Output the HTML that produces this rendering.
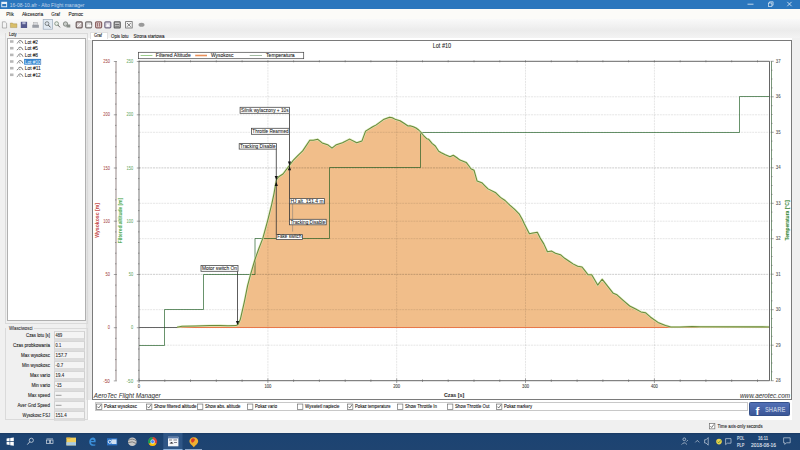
<!DOCTYPE html>
<html><head><meta charset="utf-8">
<style>
*{margin:0;padding:0;box-sizing:border-box}
html,body{width:800px;height:450px;overflow:hidden;background:#f0f0f0;font-family:"Liberation Sans",sans-serif;color:#222}
.a{position:absolute}
#title{left:0;top:0;width:800px;height:9px;background:#2b76bd}
#menu{left:0;top:9px;width:800px;height:10px;background:#fcfbf8}
#tool{left:0;top:19px;width:800px;height:11px;background:linear-gradient(#f9f9f9,#ececec)}
#tabstrip{left:0;top:30px;width:800px;height:8px;background:linear-gradient(#ebebeb,#f3f3f3)}
#tabpage{left:87.7px;top:38px;width:704.8px;height:382px;background:#fff}
#chart{left:92px;top:40px;width:700px;height:359.6px;border:1px solid #7a7a7a;background:#fff}
#tree{left:6.7px;top:38.2px;width:79.6px;height:283px;background:#fff;border:0.8px solid #b0b0b0}
.tb{position:absolute;left:54.3px;width:31.2px;height:10px;background:#f4f4f4;border-left:0.8px solid #d0d0d0;border-right:0.8px solid #d0d0d0;border-top:1px solid #d6d6d6;border-bottom:3px solid #dcdcdc}
.cb{position:absolute;width:5.8px;height:5.6px;border:0.7px solid #666;background:#fff}
.cb.on::after{content:"";position:absolute;left:1.5px;top:0.3px;width:1.7px;height:3.3px;border-right:0.6px solid #444;border-bottom:0.6px solid #444;transform:rotate(40deg)}
#taskbar{left:0;top:432.8px;width:800px;height:17.2px;background:linear-gradient(#1a3a62 0,#1c4372 2px,#1f4471 100%)}
</style></head><body>
<div id="title" class="a"></div>
<svg class="a" style="left:0;top:0" width="800" height="10">
 <rect x="1.3" y="1.8" width="5.8" height="5.4" fill="#e8f0f8"/><rect x="2.2" y="4" width="4" height="2.3" fill="#2b76bd"/>
 <line x1="747.5" y1="4.2" x2="753.5" y2="4.2" stroke="#fff" stroke-width="0.7"/>
 <rect x="768.3" y="3" width="3.6" height="3.6" fill="none" stroke="#fff" stroke-width="0.6"/>
 <path d="M769.6,3 V1.8 H773.1 V5.2 H771.9" fill="none" stroke="#fff" stroke-width="0.6"/>
 <path d="M787.3,1.9 L791.6,6.2 M791.6,1.9 L787.3,6.2" stroke="#fff" stroke-width="0.7"/>
</svg>
<div id="menu" class="a"></div>
<div id="tool" class="a"></div>
<svg class="a" style="left:0;top:18" width="150" height="13">
 <path d="M2.4,3.8 h2.8 l1.4,1.4 v4.8 h-4.2z" fill="#f4f4f4" stroke="#8a8a8a" stroke-width="0.6"/>
 <path d="M10.4,5 h2.2 l0.7,0.8 h3.6 v3.8 h-6.5z" fill="#d9bf6a" stroke="#9a8440" stroke-width="0.4"/>
 <rect x="20.8" y="3.8" width="6.3" height="6.2" fill="#565a8e"/>
 <rect x="22.3" y="4.2" width="3.3" height="2" fill="#b8bcd8"/>
 <path d="M32.3,6.8 h6.6 v3 h-6.6z" fill="#9a9ea6"/><rect x="33.6" y="4.4" width="4" height="2.6" fill="#d8dade" stroke="#8a8a8a" stroke-width="0.3"/>
 <rect x="43.2" y="1.4" width="9.2" height="9.8" fill="#e2eaf2" stroke="#9aaabb" stroke-width="0.7"/>
 <circle cx="47" cy="5.6" r="1.9" fill="#dfe6ee" stroke="#6a7070" stroke-width="0.8"/><line x1="48.3" y1="7" x2="50.5" y2="9.4" stroke="#555" stroke-width="1"/>
 <circle cx="56.6" cy="5.6" r="1.9" fill="#e8eee8" stroke="#7a8a7a" stroke-width="0.8"/><line x1="57.9" y1="7" x2="60" y2="9.4" stroke="#666" stroke-width="1"/>
 <circle cx="65.5" cy="6" r="2.2" fill="#c8ccc8" stroke="#6a706a" stroke-width="0.7"/><rect x="66.5" y="6.5" width="3.8" height="3" fill="#8a908a"/>
 <rect x="76.2" y="3.8" width="6" height="6" fill="#d8cfcf" stroke="#6e5e5e" stroke-width="1.2" rx="1"/><path d="M77.4,8.6 L81,5" stroke="#fff" stroke-width="0.9"/>
 <rect x="85.6" y="3.8" width="6" height="6" fill="#dcdcdc" stroke="#7a7676" stroke-width="1.2" rx="1"/><path d="M86.8,8.4 l1.5,-2.2 l1.3,1.4 l1.3,-1.4 l0.8,2.2z" fill="#fff"/>
 <rect x="95.6" y="3.8" width="6" height="6" fill="#e2d2d2" stroke="#8a6262" stroke-width="1.2" rx="1"/><path d="M97.6,5 v3.6 M99.6,5 v3.6" stroke="#8a5050" stroke-width="0.8"/>
 <rect x="104.8" y="3.8" width="6" height="6" fill="#dcd8e4" stroke="#766e86" stroke-width="1.2" rx="1"/><path d="M106,8.4 l1.8,-2.6 l1.8,2.6z" fill="#fff"/>
 <rect x="114.2" y="3.8" width="6" height="6" fill="#d8d8d8" stroke="#5e5e5e" stroke-width="1.2" rx="0.6"/><path d="M115.2,6.4 h4 M115.2,8.2 h4" stroke="#444" stroke-width="0.8"/>
 <rect x="125.6" y="3.6" width="6.6" height="6.4" fill="#f2f2f2" stroke="#6a6a6a" stroke-width="0.8"/><path d="M127,5 l3.8,3.8 M130.8,5 l-3.8,3.8" stroke="#555" stroke-width="0.7"/>
 <ellipse cx="141.5" cy="6.8" rx="3" ry="2" fill="#9a9a9a"/>
</svg>
<div id="tabstrip" class="a"></div>
<div id="tabpage" class="a"></div>
<div class="a" style="left:86.3px;top:40px;width:5.9px;height:359.5px;background:linear-gradient(90deg,#e2e2e2,#ececec)"></div>
<div class="a" style="left:89.5px;top:31.5px;width:18px;height:7px;background:#fff;border:0.6px solid #e0e0e0;border-bottom:none"></div>
<div id="chart" class="a"></div>

<div class="a" style="left:5px;top:33px;width:82.6px;height:291px;border:0.6px solid #dadada;border-top:none"></div>
<div class="a" style="left:17.5px;top:33px;width:70px;height:0.6px;background:#dadada"></div>
<div class="a" style="left:34px;top:328px;width:53.6px;height:0.6px;background:#dadada"></div>
<div id="tree" class="a"></div>
<svg class="a" style="left:0;top:36" width="90" height="45">
 <g fill="#b8b8b8">
  <rect x="10" y="4.2" width="3.5" height="2.6"/><rect x="10" y="10.9" width="3.5" height="2.6"/>
  <rect x="10" y="17.6" width="3.5" height="2.6"/><rect x="10" y="24.2" width="3.5" height="2.6"/>
  <rect x="10" y="30.9" width="3.5" height="2.6"/><rect x="10" y="37.5" width="3.5" height="2.6"/>
 </g>
 <g fill="none" stroke="#2a2a2a" stroke-width="0.6">
  <path d="M16.8,7.40 l1.6,-1.2 M18.2,5.60 q1.8,-2.2 3.6,-0.4 l1.2,2.2 M19.5,6.20 l0.6,1.2"/>
  <path d="M16.8,14.07 l1.6,-1.2 M18.2,12.27 q1.8,-2.2 3.6,-0.4 l1.2,2.2 M19.5,12.87 l0.6,1.2"/>
  <path d="M16.8,20.74 l1.6,-1.2 M18.2,18.94 q1.8,-2.2 3.6,-0.4 l1.2,2.2 M19.5,19.54 l0.6,1.2"/>
  <path d="M16.8,27.41 l1.6,-1.2 M18.2,25.61 q1.8,-2.2 3.6,-0.4 l1.2,2.2 M19.5,26.21 l0.6,1.2"/>
  <path d="M16.8,34.08 l1.6,-1.2 M18.2,32.28 q1.8,-2.2 3.6,-0.4 l1.2,2.2 M19.5,32.88 l0.6,1.2"/>
  <path d="M16.8,40.75 l1.6,-1.2 M18.2,38.95 q1.8,-2.2 3.6,-0.4 l1.2,2.2 M19.5,39.55 l0.6,1.2"/>
 </g>
 <rect x="24.1" y="22.9" width="17" height="5.8" fill="#3a84cc"/>
</svg>

<div class="a" style="left:5px;top:328px;width:82.6px;height:92px;border:0.6px solid #dadada;border-top:none"></div>




<div class="tb" style="top:331px"></div><div class="tb" style="top:341px"></div><div class="tb" style="top:351px"></div><div class="tb" style="top:361px"></div><div class="tb" style="top:371px"></div><div class="tb" style="top:381px"></div><div class="tb" style="top:391px"></div><div class="tb" style="top:401px"></div><div class="tb" style="top:411px"></div>
<svg width="800" height="450" viewBox="0 0 800 450" style="position:absolute;left:0;top:0" font-family="Liberation Sans, sans-serif"><path d="M177,327.5 L177.0,327.2 L182.0,326.3 L195.0,326.0 L210.0,325.6 L220.0,325.4 L228.0,325.8 L236.0,325.6 L238.0,324.5 L240.4,319.2 L244.4,301.6 L247.6,285.6 L250.8,273.6 L254.8,260.0 L258.5,249.5 L262.8,238.4 L267.6,220.8 L271.6,204.8 L274.0,193.6 L275.6,184.0 L276.6,179.5 L278.7,176.7 L283.0,174.0 L289.0,166.0 L292.9,160.7 L297.3,156.2 L302.7,150.9 L309.8,140.2 L313.3,140.2 L317.8,139.3 L322.2,142.9 L327.6,144.7 L332.0,148.2 L336.4,144.7 L342.5,142.7 L349.6,139.1 L356.7,142.7 L362.0,140.9 L365.6,131.1 L372.7,126.7 L376.3,124.9 L383.4,119.6 L389.6,117.3 L392.3,117.8 L395.8,119.6 L400.0,120.7 L404.0,123.3 L408.0,126.0 L410.0,125.7 L413.3,126.7 L416.0,128.0 L418.7,130.0 L420.7,132.0 L423.3,135.3 L426.7,138.7 L428.7,139.3 L432.0,143.3 L435.3,146.0 L438.7,151.3 L441.3,152.7 L445.3,154.7 L450.0,156.7 L453.3,155.3 L457.3,158.0 L460.0,160.1 L466.2,162.4 L468.6,165.5 L470.9,168.7 L474.0,170.2 L477.1,181.1 L481.8,182.7 L484.9,185.8 L488.0,188.9 L495.8,192.8 L500.4,197.4 L505.1,200.5 L509.8,205.2 L514.4,209.1 L519.1,213.8 L522.2,219.2 L524.3,223.7 L527.2,229.4 L529.4,233.8 L533.0,233.0 L537.3,232.3 L540.2,238.1 L543.8,243.9 L547.4,251.8 L551.7,251.1 L555.4,253.2 L560.4,254.7 L564.7,258.3 L569.1,261.2 L573.4,264.1 L577.7,266.2 L582.0,267.0 L584.9,270.6 L588.0,274.7 L591.7,274.7 L597.7,285.1 L602.1,279.2 L607.4,285.9 L613.3,293.3 L617.0,294.8 L623.7,300.8 L629.7,306.0 L635.7,309.0 L640.9,311.9 L645.4,312.7 L650.6,317.2 L658.0,322.4 L665.5,325.4 L670.8,327.0 L680.0,327.0 L692.0,326.5 L700.0,326.8 L769.5,326.9 L769.5,327.5 Z" fill="#f1be8a"/><g stroke="#000" stroke-opacity="0.13" stroke-width="0.8" stroke-dasharray="2,0.8"><line x1="139" y1="114.8" x2="769.5" y2="114.8"/><line x1="139" y1="168.0" x2="769.5" y2="168.0"/><line x1="139" y1="221.2" x2="769.5" y2="221.2"/><line x1="139" y1="274.5" x2="769.5" y2="274.5"/><line x1="139" y1="327.7" x2="769.5" y2="327.7"/><line x1="139" y1="96.8" x2="769.5" y2="96.8"/><line x1="139" y1="132.3" x2="769.5" y2="132.3"/><line x1="139" y1="167.8" x2="769.5" y2="167.8"/><line x1="139" y1="203.3" x2="769.5" y2="203.3"/><line x1="139" y1="238.7" x2="769.5" y2="238.7"/><line x1="139" y1="274.2" x2="769.5" y2="274.2"/><line x1="139" y1="309.7" x2="769.5" y2="309.7"/><line x1="139" y1="345.2" x2="769.5" y2="345.2"/><line x1="267.9" y1="61.3" x2="267.9" y2="380.7"/><line x1="396.7" y1="61.3" x2="396.7" y2="380.7"/><line x1="525.5" y1="61.3" x2="525.5" y2="380.7"/><line x1="654.4" y1="61.3" x2="654.4" y2="380.7"/></g><line x1="139" y1="327.5" x2="177" y2="327.5" stroke="#555" stroke-width="0.9"/><line x1="177" y1="327.5" x2="769.5" y2="327.5" stroke="#e8784a" stroke-width="1.2"/><polyline points="139,345.5 164.5,345.5 164.5,309.5 203.5,309.5 203.5,274.5 255,274.5 255,238.5 329.5,238.5 329.5,167.5 420.5,167.5 420.5,132.5 739.5,132.5 739.5,96.5 769.5,96.5" fill="none" stroke="#17581c" stroke-opacity="0.72" stroke-width="0.9"/><polyline points="177.0,327.2 182.0,326.3 195.0,326.0 210.0,325.6 220.0,325.4 228.0,325.8 236.0,325.6 238.0,324.5 240.4,319.2 244.4,301.6 247.6,285.6 250.8,273.6 254.8,260.0 258.5,249.5 262.8,238.4 267.6,220.8 271.6,204.8 274.0,193.6 275.6,184.0 276.6,179.5 278.7,176.7 283.0,174.0 289.0,166.0 292.9,160.7 297.3,156.2 302.7,150.9 309.8,140.2 313.3,140.2 317.8,139.3 322.2,142.9 327.6,144.7 332.0,148.2 336.4,144.7 342.5,142.7 349.6,139.1 356.7,142.7 362.0,140.9 365.6,131.1 372.7,126.7 376.3,124.9 383.4,119.6 389.6,117.3 392.3,117.8 395.8,119.6 400.0,120.7 404.0,123.3 408.0,126.0 410.0,125.7 413.3,126.7 416.0,128.0 418.7,130.0 420.7,132.0 423.3,135.3 426.7,138.7 428.7,139.3 432.0,143.3 435.3,146.0 438.7,151.3 441.3,152.7 445.3,154.7 450.0,156.7 453.3,155.3 457.3,158.0 460.0,160.1 466.2,162.4 468.6,165.5 470.9,168.7 474.0,170.2 477.1,181.1 481.8,182.7 484.9,185.8 488.0,188.9 495.8,192.8 500.4,197.4 505.1,200.5 509.8,205.2 514.4,209.1 519.1,213.8 522.2,219.2 524.3,223.7 527.2,229.4 529.4,233.8 533.0,233.0 537.3,232.3 540.2,238.1 543.8,243.9 547.4,251.8 551.7,251.1 555.4,253.2 560.4,254.7 564.7,258.3 569.1,261.2 573.4,264.1 577.7,266.2 582.0,267.0 584.9,270.6 588.0,274.7 591.7,274.7 597.7,285.1 602.1,279.2 607.4,285.9 613.3,293.3 617.0,294.8 623.7,300.8 629.7,306.0 635.7,309.0 640.9,311.9 645.4,312.7 650.6,317.2 658.0,322.4 665.5,325.4 670.8,327.0 680.0,327.0 692.0,326.5 700.0,326.8 769.5,326.9" fill="none" stroke="#d8ebb8" stroke-width="2.2" stroke-linejoin="round" opacity="0.8"/><polyline points="177.0,327.2 182.0,326.3 195.0,326.0 210.0,325.6 220.0,325.4 228.0,325.8 236.0,325.6 238.0,324.5 240.4,319.2 244.4,301.6 247.6,285.6 250.8,273.6 254.8,260.0 258.5,249.5 262.8,238.4 267.6,220.8 271.6,204.8 274.0,193.6 275.6,184.0 276.6,179.5 278.7,176.7 283.0,174.0 289.0,166.0 292.9,160.7 297.3,156.2 302.7,150.9 309.8,140.2 313.3,140.2 317.8,139.3 322.2,142.9 327.6,144.7 332.0,148.2 336.4,144.7 342.5,142.7 349.6,139.1 356.7,142.7 362.0,140.9 365.6,131.1 372.7,126.7 376.3,124.9 383.4,119.6 389.6,117.3 392.3,117.8 395.8,119.6 400.0,120.7 404.0,123.3 408.0,126.0 410.0,125.7 413.3,126.7 416.0,128.0 418.7,130.0 420.7,132.0 423.3,135.3 426.7,138.7 428.7,139.3 432.0,143.3 435.3,146.0 438.7,151.3 441.3,152.7 445.3,154.7 450.0,156.7 453.3,155.3 457.3,158.0 460.0,160.1 466.2,162.4 468.6,165.5 470.9,168.7 474.0,170.2 477.1,181.1 481.8,182.7 484.9,185.8 488.0,188.9 495.8,192.8 500.4,197.4 505.1,200.5 509.8,205.2 514.4,209.1 519.1,213.8 522.2,219.2 524.3,223.7 527.2,229.4 529.4,233.8 533.0,233.0 537.3,232.3 540.2,238.1 543.8,243.9 547.4,251.8 551.7,251.1 555.4,253.2 560.4,254.7 564.7,258.3 569.1,261.2 573.4,264.1 577.7,266.2 582.0,267.0 584.9,270.6 588.0,274.7 591.7,274.7 597.7,285.1 602.1,279.2 607.4,285.9 613.3,293.3 617.0,294.8 623.7,300.8 629.7,306.0 635.7,309.0 640.9,311.9 645.4,312.7 650.6,317.2 658.0,322.4 665.5,325.4 670.8,327.0 680.0,327.0 692.0,326.5 700.0,326.8 769.5,326.9" fill="none" stroke="#6a8a3c" stroke-width="1.05" stroke-linejoin="round"/><line x1="116" y1="61.3" x2="116" y2="380.7" stroke="#8a7a7a" stroke-width="0.9"/><line x1="139" y1="61.3" x2="139" y2="380.7" stroke="#666" stroke-width="0.9"/><line x1="139" y1="61.3" x2="769.5" y2="61.3" stroke="#555" stroke-width="0.9"/><line x1="139" y1="380.7" x2="769.5" y2="380.7" stroke="#555" stroke-width="0.9"/><line x1="769.5" y1="61.3" x2="769.5" y2="380.7" stroke="#555" stroke-width="0.9"/><line x1="771.5" y1="61.3" x2="771.5" y2="380.7" stroke="#6a8a6a" stroke-width="0.9"/><g stroke="#666" stroke-width="0.6"><line x1="113.8" y1="380.9" x2="116.88" y2="380.9"/><line x1="136.8" y1="380.9" x2="139.88" y2="380.9"/><line x1="115.0" y1="370.3" x2="116.4" y2="370.3"/><line x1="138.0" y1="370.3" x2="139.4" y2="370.3"/><line x1="115.0" y1="359.6" x2="116.4" y2="359.6"/><line x1="138.0" y1="359.6" x2="139.4" y2="359.6"/><line x1="115.0" y1="349.0" x2="116.4" y2="349.0"/><line x1="138.0" y1="349.0" x2="139.4" y2="349.0"/><line x1="115.0" y1="338.3" x2="116.4" y2="338.3"/><line x1="138.0" y1="338.3" x2="139.4" y2="338.3"/><line x1="113.8" y1="327.7" x2="116.88" y2="327.7"/><line x1="136.8" y1="327.7" x2="139.88" y2="327.7"/><line x1="115.0" y1="317.1" x2="116.4" y2="317.1"/><line x1="138.0" y1="317.1" x2="139.4" y2="317.1"/><line x1="115.0" y1="306.4" x2="116.4" y2="306.4"/><line x1="138.0" y1="306.4" x2="139.4" y2="306.4"/><line x1="115.0" y1="295.8" x2="116.4" y2="295.8"/><line x1="138.0" y1="295.8" x2="139.4" y2="295.8"/><line x1="115.0" y1="285.1" x2="116.4" y2="285.1"/><line x1="138.0" y1="285.1" x2="139.4" y2="285.1"/><line x1="113.8" y1="274.5" x2="116.88" y2="274.5"/><line x1="136.8" y1="274.5" x2="139.88" y2="274.5"/><line x1="115.0" y1="263.8" x2="116.4" y2="263.8"/><line x1="138.0" y1="263.8" x2="139.4" y2="263.8"/><line x1="115.0" y1="253.2" x2="116.4" y2="253.2"/><line x1="138.0" y1="253.2" x2="139.4" y2="253.2"/><line x1="115.0" y1="242.5" x2="116.4" y2="242.5"/><line x1="138.0" y1="242.5" x2="139.4" y2="242.5"/><line x1="115.0" y1="231.9" x2="116.4" y2="231.9"/><line x1="138.0" y1="231.9" x2="139.4" y2="231.9"/><line x1="113.8" y1="221.2" x2="116.88" y2="221.2"/><line x1="136.8" y1="221.2" x2="139.88" y2="221.2"/><line x1="115.0" y1="210.6" x2="116.4" y2="210.6"/><line x1="138.0" y1="210.6" x2="139.4" y2="210.6"/><line x1="115.0" y1="199.9" x2="116.4" y2="199.9"/><line x1="138.0" y1="199.9" x2="139.4" y2="199.9"/><line x1="115.0" y1="189.3" x2="116.4" y2="189.3"/><line x1="138.0" y1="189.3" x2="139.4" y2="189.3"/><line x1="115.0" y1="178.6" x2="116.4" y2="178.6"/><line x1="138.0" y1="178.6" x2="139.4" y2="178.6"/><line x1="113.8" y1="168.0" x2="116.88" y2="168.0"/><line x1="136.8" y1="168.0" x2="139.88" y2="168.0"/><line x1="115.0" y1="157.4" x2="116.4" y2="157.4"/><line x1="138.0" y1="157.4" x2="139.4" y2="157.4"/><line x1="115.0" y1="146.7" x2="116.4" y2="146.7"/><line x1="138.0" y1="146.7" x2="139.4" y2="146.7"/><line x1="115.0" y1="136.1" x2="116.4" y2="136.1"/><line x1="138.0" y1="136.1" x2="139.4" y2="136.1"/><line x1="115.0" y1="125.4" x2="116.4" y2="125.4"/><line x1="138.0" y1="125.4" x2="139.4" y2="125.4"/><line x1="113.8" y1="114.8" x2="116.88" y2="114.8"/><line x1="136.8" y1="114.8" x2="139.88" y2="114.8"/><line x1="115.0" y1="104.1" x2="116.4" y2="104.1"/><line x1="138.0" y1="104.1" x2="139.4" y2="104.1"/><line x1="115.0" y1="93.5" x2="116.4" y2="93.5"/><line x1="138.0" y1="93.5" x2="139.4" y2="93.5"/><line x1="115.0" y1="82.8" x2="116.4" y2="82.8"/><line x1="138.0" y1="82.8" x2="139.4" y2="82.8"/><line x1="115.0" y1="72.2" x2="116.4" y2="72.2"/><line x1="138.0" y1="72.2" x2="139.4" y2="72.2"/><line x1="113.8" y1="61.5" x2="116.88" y2="61.5"/><line x1="136.8" y1="61.5" x2="139.88" y2="61.5"/><line x1="770.62" y1="380.7" x2="773.7" y2="380.7"/><line x1="771.1" y1="371.8" x2="772.5" y2="371.8"/><line x1="771.1" y1="363.0" x2="772.5" y2="363.0"/><line x1="771.1" y1="354.1" x2="772.5" y2="354.1"/><line x1="770.62" y1="345.2" x2="773.7" y2="345.2"/><line x1="771.1" y1="336.3" x2="772.5" y2="336.3"/><line x1="771.1" y1="327.5" x2="772.5" y2="327.5"/><line x1="771.1" y1="318.6" x2="772.5" y2="318.6"/><line x1="770.62" y1="309.7" x2="773.7" y2="309.7"/><line x1="771.1" y1="300.8" x2="772.5" y2="300.8"/><line x1="771.1" y1="292.0" x2="772.5" y2="292.0"/><line x1="771.1" y1="283.1" x2="772.5" y2="283.1"/><line x1="770.62" y1="274.2" x2="773.7" y2="274.2"/><line x1="771.1" y1="265.4" x2="772.5" y2="265.4"/><line x1="771.1" y1="256.5" x2="772.5" y2="256.5"/><line x1="771.1" y1="247.6" x2="772.5" y2="247.6"/><line x1="770.62" y1="238.7" x2="773.7" y2="238.7"/><line x1="771.1" y1="229.9" x2="772.5" y2="229.9"/><line x1="771.1" y1="221.0" x2="772.5" y2="221.0"/><line x1="771.1" y1="212.1" x2="772.5" y2="212.1"/><line x1="770.62" y1="203.3" x2="773.7" y2="203.3"/><line x1="771.1" y1="194.4" x2="772.5" y2="194.4"/><line x1="771.1" y1="185.5" x2="772.5" y2="185.5"/><line x1="771.1" y1="176.6" x2="772.5" y2="176.6"/><line x1="770.62" y1="167.8" x2="773.7" y2="167.8"/><line x1="771.1" y1="158.9" x2="772.5" y2="158.9"/><line x1="771.1" y1="150.0" x2="772.5" y2="150.0"/><line x1="771.1" y1="141.1" x2="772.5" y2="141.1"/><line x1="770.62" y1="132.3" x2="773.7" y2="132.3"/><line x1="771.1" y1="123.4" x2="772.5" y2="123.4"/><line x1="771.1" y1="114.5" x2="772.5" y2="114.5"/><line x1="771.1" y1="105.7" x2="772.5" y2="105.7"/><line x1="770.62" y1="96.8" x2="773.7" y2="96.8"/><line x1="771.1" y1="87.9" x2="772.5" y2="87.9"/><line x1="771.1" y1="79.0" x2="772.5" y2="79.0"/><line x1="771.1" y1="70.2" x2="772.5" y2="70.2"/><line x1="770.62" y1="61.3" x2="773.7" y2="61.3"/><line x1="139.0" y1="378.4" x2="139.0" y2="383.0"/><line x1="139.0" y1="60.3" x2="139.0" y2="62.3"/><line x1="164.8" y1="379.4" x2="164.8" y2="382.0"/><line x1="164.8" y1="60.3" x2="164.8" y2="62.3"/><line x1="190.5" y1="379.4" x2="190.5" y2="382.0"/><line x1="190.5" y1="60.3" x2="190.5" y2="62.3"/><line x1="216.3" y1="379.4" x2="216.3" y2="382.0"/><line x1="216.3" y1="60.3" x2="216.3" y2="62.3"/><line x1="242.1" y1="379.4" x2="242.1" y2="382.0"/><line x1="242.1" y1="60.3" x2="242.1" y2="62.3"/><line x1="267.9" y1="378.4" x2="267.9" y2="383.0"/><line x1="267.9" y1="60.3" x2="267.9" y2="62.3"/><line x1="293.6" y1="379.4" x2="293.6" y2="382.0"/><line x1="293.6" y1="60.3" x2="293.6" y2="62.3"/><line x1="319.4" y1="379.4" x2="319.4" y2="382.0"/><line x1="319.4" y1="60.3" x2="319.4" y2="62.3"/><line x1="345.2" y1="379.4" x2="345.2" y2="382.0"/><line x1="345.2" y1="60.3" x2="345.2" y2="62.3"/><line x1="370.9" y1="379.4" x2="370.9" y2="382.0"/><line x1="370.9" y1="60.3" x2="370.9" y2="62.3"/><line x1="396.7" y1="378.4" x2="396.7" y2="383.0"/><line x1="396.7" y1="60.3" x2="396.7" y2="62.3"/><line x1="422.5" y1="379.4" x2="422.5" y2="382.0"/><line x1="422.5" y1="60.3" x2="422.5" y2="62.3"/><line x1="448.2" y1="379.4" x2="448.2" y2="382.0"/><line x1="448.2" y1="60.3" x2="448.2" y2="62.3"/><line x1="474.0" y1="379.4" x2="474.0" y2="382.0"/><line x1="474.0" y1="60.3" x2="474.0" y2="62.3"/><line x1="499.8" y1="379.4" x2="499.8" y2="382.0"/><line x1="499.8" y1="60.3" x2="499.8" y2="62.3"/><line x1="525.5" y1="378.4" x2="525.5" y2="383.0"/><line x1="525.5" y1="60.3" x2="525.5" y2="62.3"/><line x1="551.3" y1="379.4" x2="551.3" y2="382.0"/><line x1="551.3" y1="60.3" x2="551.3" y2="62.3"/><line x1="577.1" y1="379.4" x2="577.1" y2="382.0"/><line x1="577.1" y1="60.3" x2="577.1" y2="62.3"/><line x1="602.9" y1="379.4" x2="602.9" y2="382.0"/><line x1="602.9" y1="60.3" x2="602.9" y2="62.3"/><line x1="628.6" y1="379.4" x2="628.6" y2="382.0"/><line x1="628.6" y1="60.3" x2="628.6" y2="62.3"/><line x1="654.4" y1="378.4" x2="654.4" y2="383.0"/><line x1="654.4" y1="60.3" x2="654.4" y2="62.3"/><line x1="680.2" y1="379.4" x2="680.2" y2="382.0"/><line x1="680.2" y1="60.3" x2="680.2" y2="62.3"/><line x1="705.9" y1="379.4" x2="705.9" y2="382.0"/><line x1="705.9" y1="60.3" x2="705.9" y2="62.3"/><line x1="731.7" y1="379.4" x2="731.7" y2="382.0"/><line x1="731.7" y1="60.3" x2="731.7" y2="62.3"/><line x1="757.5" y1="379.4" x2="757.5" y2="382.0"/><line x1="757.5" y1="60.3" x2="757.5" y2="62.3"/></g><g><text x="109.90" y="63.23" font-size="4.6" fill="#a84848" text-anchor="end" textLength="6.60" lengthAdjust="spacingAndGlyphs" stroke="#a84848" stroke-width="0.04">250</text><text x="133.20" y="63.23" font-size="4.6" fill="#68a868" text-anchor="end" textLength="6.60" lengthAdjust="spacingAndGlyphs" stroke="#68a868" stroke-width="0.04">250</text><text x="109.90" y="116.47" font-size="4.6" fill="#a84848" text-anchor="end" textLength="6.60" lengthAdjust="spacingAndGlyphs" stroke="#a84848" stroke-width="0.04">200</text><text x="133.20" y="116.47" font-size="4.6" fill="#68a868" text-anchor="end" textLength="6.60" lengthAdjust="spacingAndGlyphs" stroke="#68a868" stroke-width="0.04">200</text><text x="109.90" y="169.70" font-size="4.6" fill="#a84848" text-anchor="end" textLength="6.60" lengthAdjust="spacingAndGlyphs" stroke="#a84848" stroke-width="0.04">150</text><text x="133.20" y="169.70" font-size="4.6" fill="#68a868" text-anchor="end" textLength="6.60" lengthAdjust="spacingAndGlyphs" stroke="#68a868" stroke-width="0.04">150</text><text x="109.90" y="222.93" font-size="4.6" fill="#a84848" text-anchor="end" textLength="6.60" lengthAdjust="spacingAndGlyphs" stroke="#a84848" stroke-width="0.04">100</text><text x="133.20" y="222.93" font-size="4.6" fill="#68a868" text-anchor="end" textLength="6.60" lengthAdjust="spacingAndGlyphs" stroke="#68a868" stroke-width="0.04">100</text><text x="109.90" y="276.17" font-size="4.6" fill="#a84848" text-anchor="end" textLength="4.40" lengthAdjust="spacingAndGlyphs" stroke="#a84848" stroke-width="0.04">50</text><text x="133.20" y="276.17" font-size="4.6" fill="#68a868" text-anchor="end" textLength="4.40" lengthAdjust="spacingAndGlyphs" stroke="#68a868" stroke-width="0.04">50</text><text x="109.90" y="329.40" font-size="4.6" fill="#a84848" text-anchor="end" textLength="2.20" lengthAdjust="spacingAndGlyphs" stroke="#a84848" stroke-width="0.04">0</text><text x="133.20" y="329.40" font-size="4.6" fill="#68a868" text-anchor="end" textLength="2.20" lengthAdjust="spacingAndGlyphs" stroke="#68a868" stroke-width="0.04">0</text><text x="109.90" y="382.63" font-size="4.6" fill="#a84848" text-anchor="end" textLength="6.60" lengthAdjust="spacingAndGlyphs" stroke="#a84848" stroke-width="0.04">-50</text><text x="133.20" y="382.63" font-size="4.6" fill="#68a868" text-anchor="end" textLength="6.60" lengthAdjust="spacingAndGlyphs" stroke="#68a868" stroke-width="0.04">-50</text><text x="775.80" y="382.30" font-size="4.6" fill="#555" textLength="4.80" lengthAdjust="spacingAndGlyphs" stroke="#555" stroke-width="0.08">28</text><text x="775.80" y="346.81" font-size="4.6" fill="#555" textLength="4.80" lengthAdjust="spacingAndGlyphs" stroke="#555" stroke-width="0.08">29</text><text x="775.80" y="311.32" font-size="4.6" fill="#555" textLength="4.80" lengthAdjust="spacingAndGlyphs" stroke="#555" stroke-width="0.08">30</text><text x="775.80" y="275.83" font-size="4.6" fill="#555" textLength="4.80" lengthAdjust="spacingAndGlyphs" stroke="#555" stroke-width="0.08">31</text><text x="775.80" y="240.34" font-size="4.6" fill="#555" textLength="4.80" lengthAdjust="spacingAndGlyphs" stroke="#555" stroke-width="0.08">32</text><text x="775.80" y="204.86" font-size="4.6" fill="#555" textLength="4.80" lengthAdjust="spacingAndGlyphs" stroke="#555" stroke-width="0.08">33</text><text x="775.80" y="169.37" font-size="4.6" fill="#555" textLength="4.80" lengthAdjust="spacingAndGlyphs" stroke="#555" stroke-width="0.08">34</text><text x="775.80" y="133.88" font-size="4.6" fill="#555" textLength="4.80" lengthAdjust="spacingAndGlyphs" stroke="#555" stroke-width="0.08">35</text><text x="775.80" y="98.39" font-size="4.6" fill="#555" textLength="4.80" lengthAdjust="spacingAndGlyphs" stroke="#555" stroke-width="0.08">36</text><text x="775.80" y="62.90" font-size="4.6" fill="#555" textLength="4.80" lengthAdjust="spacingAndGlyphs" stroke="#555" stroke-width="0.08">37</text><text x="139.00" y="388.30" font-size="4.6" fill="#444" text-anchor="middle" textLength="2.30" lengthAdjust="spacingAndGlyphs" stroke="#444" stroke-width="0.08">0</text><text x="267.85" y="388.30" font-size="4.6" fill="#444" text-anchor="middle" textLength="6.90" lengthAdjust="spacingAndGlyphs" stroke="#444" stroke-width="0.08">100</text><text x="396.70" y="388.30" font-size="4.6" fill="#444" text-anchor="middle" textLength="6.90" lengthAdjust="spacingAndGlyphs" stroke="#444" stroke-width="0.08">200</text><text x="525.55" y="388.30" font-size="4.6" fill="#444" text-anchor="middle" textLength="6.90" lengthAdjust="spacingAndGlyphs" stroke="#444" stroke-width="0.08">300</text><text x="654.40" y="388.30" font-size="4.6" fill="#444" text-anchor="middle" textLength="6.90" lengthAdjust="spacingAndGlyphs" stroke="#444" stroke-width="0.08">400</text></g><g stroke="#333" stroke-width="0.8"><line x1="237.5" y1="271" x2="237.5" y2="322"/><line x1="276.3" y1="149" x2="276.3" y2="234.6"/><line x1="289.5" y1="113.4" x2="289.5" y2="224.8"/><line x1="292.6" y1="203.7" x2="292.6" y2="219.3" stroke="#777" stroke-width="0.5"/><line x1="292.6" y1="224.8" x2="292.6" y2="231.6" stroke="#777" stroke-width="0.5"/></g><path d="M235.9,321 L239.1,321 L237.5,325 Z" fill="#111"/><path d="M274.7,176 L277.90000000000003,176 L276.3,180 Z" fill="#111"/><path d="M274.7,186 L277.90000000000003,186 L276.3,182 Z" fill="#111"/><path d="M287.9,161.4 L291.1,161.4 L289.5,165.4 Z" fill="#111"/><path d="M287.9,170.2 L291.1,170.2 L289.5,166.2 Z" fill="#111"/><rect x="201.0" y="265.5" width="37.0" height="5.800000000000011" fill="#fff" stroke="#4a4a4a" stroke-width="0.8"/><text x="201.90" y="270.10" font-size="4.7" fill="#1a1a1a" textLength="35.20" lengthAdjust="spacingAndGlyphs" stroke="#1a1a1a" stroke-width="0.06">Motor switch On</text><rect x="276.3" y="234.6" width="26.099999999999966" height="4.900000000000006" fill="#fff" stroke="#4a4a4a" stroke-width="0.8"/><text x="277.20" y="238.30" font-size="4.7" fill="#1a1a1a" textLength="24.30" lengthAdjust="spacingAndGlyphs" stroke="#1a1a1a" stroke-width="0.06">Fake switch</text><rect x="240.1" y="107.3" width="49.400000000000006" height="6.0" fill="#fff" stroke="#4a4a4a" stroke-width="0.8"/><text x="241.00" y="112.10" font-size="4.7" fill="#1a1a1a" textLength="47.60" lengthAdjust="spacingAndGlyphs" stroke="#1a1a1a" stroke-width="0.06">Silnik wylaczony + 10s</text><rect x="251.4" y="128.3" width="38.099999999999994" height="6.0" fill="#fff" stroke="#4a4a4a" stroke-width="0.8"/><text x="252.30" y="133.10" font-size="4.7" fill="#1a1a1a" textLength="36.30" lengthAdjust="spacingAndGlyphs" stroke="#1a1a1a" stroke-width="0.06">Throttle Rearmed</text><rect x="239.2" y="143.6" width="37.30000000000001" height="5.5" fill="#fff" stroke="#4a4a4a" stroke-width="0.8"/><text x="240.10" y="147.90" font-size="4.7" fill="#1a1a1a" textLength="35.50" lengthAdjust="spacingAndGlyphs" stroke="#1a1a1a" stroke-width="0.06">Tracking Disable</text><rect x="289.5" y="198.6" width="34.89999999999998" height="5.200000000000017" fill="#fff" stroke="#4a4a4a" stroke-width="0.8"/><text x="290.40" y="202.60" font-size="4.7" fill="#1a1a1a" textLength="33.10" lengthAdjust="spacingAndGlyphs" stroke="#1a1a1a" stroke-width="0.06">HJ alt. 151.4 m</text><rect x="289.5" y="219.3" width="36.69999999999999" height="5.5" fill="#fff" stroke="#4a4a4a" stroke-width="0.8"/><text x="290.40" y="223.60" font-size="4.7" fill="#1a1a1a" textLength="34.90" lengthAdjust="spacingAndGlyphs" stroke="#1a1a1a" stroke-width="0.06">Tracking Disable</text><rect x="138.5" y="52.3" width="165.2" height="6.4" fill="#fff" stroke="#444" stroke-width="0.7"/><line x1="140.6" y1="55.5" x2="152.4" y2="55.5" stroke="#9ccc8c" stroke-width="1"/><line x1="195.2" y1="55.5" x2="207" y2="55.5" stroke="#e8905a" stroke-width="1.6"/><line x1="249.7" y1="55.5" x2="262" y2="55.5" stroke="#8aa88a" stroke-width="0.8"/><text x="155.80" y="57.30" font-size="5" fill="#222" textLength="34.90" lengthAdjust="spacingAndGlyphs" stroke="#222" stroke-width="0.08">Filtered Altitude</text><text x="211.00" y="57.30" font-size="5" fill="#222" textLength="22.50" lengthAdjust="spacingAndGlyphs" stroke="#222" stroke-width="0.08">Wysokosc</text><text x="266.00" y="57.30" font-size="5" fill="#222" textLength="28.70" lengthAdjust="spacingAndGlyphs" stroke="#222" stroke-width="0.08">Temperatura</text><text x="432.70" y="47.70" font-size="6.8" fill="#222" textLength="18.50" lengthAdjust="spacingAndGlyphs" stroke="#222" stroke-width="0.08">Lot #10</text><text x="444.00" y="396.60" font-size="5" fill="#333" font-weight="bold" textLength="20.20" lengthAdjust="spacingAndGlyphs" stroke="#333" stroke-width="0.08">Czas [s]</text><g transform="translate(98.8,220.4) rotate(-90)"><text x="0.00" y="0.00" font-size="5" fill="#c85050" text-anchor="middle" font-weight="bold" textLength="34.80" lengthAdjust="spacingAndGlyphs" stroke="#c85050" stroke-width="0.08">Wysokosc [m]</text></g><g transform="translate(121.6,220.5) rotate(-90)"><text x="0.00" y="0.00" font-size="5" fill="#60b060" text-anchor="middle" font-weight="bold" textLength="45.50" lengthAdjust="spacingAndGlyphs" stroke="#60b060" stroke-width="0.08">Filtered altitude [m]</text></g><g transform="translate(788.5,220.4) rotate(-90)"><text x="0.00" y="0.00" font-size="5" fill="#3a8a3a" text-anchor="middle" font-weight="bold" textLength="40.00" lengthAdjust="spacingAndGlyphs" stroke="#3a8a3a" stroke-width="0.08">Temperatura [°C]</text></g><text x="93.80" y="398.40" font-size="6.3" fill="#3a3a3a" font-style="italic" textLength="66.80" lengthAdjust="spacingAndGlyphs" stroke="#3a3a3a" stroke-width="0.05">AeroTec Flight Manager</text><text x="740.00" y="398.40" font-size="6.3" fill="#3a3a3a" font-style="italic" textLength="50.00" lengthAdjust="spacingAndGlyphs" stroke="#3a3a3a" stroke-width="0.05">www.aerotec.com</text></svg>

<div class="a" style="left:95px;top:402px;width:652.5px;height:8.8px;border:0.6px solid #c8c8c8"></div>

<div class="a" style="left:749px;top:402px;width:41.3px;height:14.3px;background:linear-gradient(#5270b6,#3c5797);border:0.6px solid #34508a;border-radius:1.2px"></div>

<div id="taskbar" class="a"></div>
<svg class="a" style="left:0;top:433" width="800" height="17">
 <g fill="#fff"><path d="M6.6,5.6 L9.6,5.1 V8.3 H6.6z"/><path d="M10.2,5 L13.8,4.4 V8.3 H10.2z"/><path d="M6.6,8.9 H9.6 V12.1 L6.6,11.6z"/><path d="M10.2,8.9 H13.8 V12.8 L10.2,12.2z"/></g>
 <circle cx="31.3" cy="7.3" r="2.1" fill="none" stroke="#dfe6ef" stroke-width="0.7"/><line x1="29.8" y1="8.8" x2="27.3" y2="11.6" stroke="#dfe6ef" stroke-width="0.8"/>
 <g fill="none" stroke="#d5dce6" stroke-width="0.7"><rect x="46.5" y="7" width="3.2" height="3.6"/><rect x="50.6" y="7" width="2.4" height="3.6"/></g><line x1="46.5" y1="5.8" x2="53" y2="5.8" stroke="#d5dce6" stroke-width="0.6"/>
 <rect x="66.4" y="4.6" width="9.6" height="7.8" fill="#f1cf5e"/><rect x="66.4" y="9.2" width="9.6" height="3.2" fill="#a9cbe4"/><rect x="66.4" y="4.6" width="4" height="1.2" fill="#e0b040"/>
 <path d="M95.6,9.3 H90.9 C91.1,11.4 93.7,12 95.3,11.2 V12.4 C92.7,13.5 89.2,12.2 89.2,8.9 C89.2,5.8 91.6,4.4 93.3,4.5 C95.3,4.6 96,6.5 95.6,9.3 Z M91,8.1 H94 C93.9,6.5 91.5,6.2 91,8.1z" fill="#3b8fd9"/>
 <rect x="107" y="5.2" width="10.2" height="7.2" fill="#2c72c4"/><rect x="111.5" y="6.4" width="5" height="4.6" fill="#cfe0f2"/><circle cx="109.8" cy="8.8" r="1.6" fill="none" stroke="#fff" stroke-width="0.8"/>
 <circle cx="132.3" cy="8.7" r="4.3" fill="#c8c8c8"/><path d="M128.4,7.4 q4,-2.8 8,0.6 M128.2,9.6 q4,-2 8.2,1" stroke="#6a6a6a" stroke-width="0.8" fill="none"/>
 <circle cx="152.6" cy="8.6" r="4.5" fill="#db4437"/><path d="M152.6,8.6 L156.5,10.85 A4.5,4.5 0 0 1 148.7,10.85 Z" fill="#f4c20d"/><path d="M152.6,8.6 L148.7,10.85 A4.5,4.5 0 0 1 152.6,4.1 Z" fill="#0f9d58"/><circle cx="152.6" cy="8.6" r="1.9" fill="#4285f4" stroke="#fff" stroke-width="0.6"/>
 <rect x="163.3" y="0" width="19.2" height="17" fill="#2f5686"/>
 <rect x="168" y="3.8" width="10.4" height="9.5" fill="#f4f6f8"/><rect x="168" y="3.8" width="10.4" height="1.6" fill="#5a7aa8"/>
 <path d="M169,7 h3 M173.5,7 h3.5 M170,10.5 l1.5,-1.5 l1.5,1.5 M174,9.5 h3" stroke="#334" stroke-width="0.6"/>
 <rect x="163.3" y="16" width="19.2" height="1" fill="#8fb4dc"/>
 <path d="M193.8,4.2 c2.6,0 4.4,1.8 4.4,4.1 c0,2.2 -2.2,3.6 -4.4,6 c-2.2,-2.4 -4.4,-3.8 -4.4,-6 c0,-2.3 1.8,-4.1 4.4,-4.1z" fill="#f0b030"/><path d="M191.5,6 c1,-1 2.5,-1 3.5,0.4 c-0.3,1.6 -1.5,2.6 -2.8,3.4 c-1.2,-1 -1.5,-2.4 -0.7,-3.8z" fill="#d83a2a"/>
 <rect x="185" y="16" width="17" height="1" fill="#8fa8c8"/>
 <g fill="none" stroke="#dfe6ef" stroke-width="0.6"><circle cx="684.3" cy="6.3" r="1.4"/><path d="M681.6,11.6 q2.7,-3.6 5.4,0"/><path d="M686.4,8.6 l1.5,-1.5"/>
 <path d="M695.3,9.4 l2,-2 l2,2"/><path d="M704.6,6.8 h1.4 l2.2,-2.2 v7.6 l-2.2,-2.2 h-1.4z"/>
 <path d="M725.6,5.6 h5.4 v4.6 h-3.6 l-1.8,1.4z"/></g>
 <circle cx="719" cy="8.6" r="2.8" fill="#e9d14a"/><path d="M717.6,8.7 l1.1,1.1 l2,-2.3" stroke="#2f8a3a" stroke-width="0.7" fill="none"/>
 <path d="M783.6,4.8 h6.6 v5 h-3.8 l-1.6,1.6 v-1.6 h-1.2z" fill="none" stroke="#dfe6ef" stroke-width="0.6"/>
</svg>
<svg width="800" height="450" viewBox="0 0 800 450" style="position:absolute;left:0;top:0" font-family="Liberation Sans, sans-serif"><text x="9.80" y="6.90" font-size="4.8" fill="#c4d6ea" textLength="74.60" lengthAdjust="spacingAndGlyphs">16-08-10.afr - Alto Flight manager</text><text x="6.25" y="16.10" font-size="4.8" fill="#1a1a1a" textLength="7.50" lengthAdjust="spacingAndGlyphs" stroke="#1a1a1a" stroke-width="0.08">Plik</text><text x="21.90" y="16.10" font-size="4.8" fill="#1a1a1a" textLength="21.20" lengthAdjust="spacingAndGlyphs" stroke="#1a1a1a" stroke-width="0.08">Akcesoria</text><text x="51.25" y="16.10" font-size="4.8" fill="#1a1a1a" textLength="8.75" lengthAdjust="spacingAndGlyphs" stroke="#1a1a1a" stroke-width="0.08">Graf</text><text x="68.50" y="16.10" font-size="4.8" fill="#1a1a1a" textLength="14.60" lengthAdjust="spacingAndGlyphs" stroke="#1a1a1a" stroke-width="0.08">Pomoc</text><text x="8.90" y="36.00" font-size="4.8" fill="#222" textLength="7.70" lengthAdjust="spacingAndGlyphs" stroke="#222" stroke-width="0.08">Loty</text><text x="93.90" y="36.80" font-size="4.8" fill="#222" textLength="8.10" lengthAdjust="spacingAndGlyphs" stroke="#222" stroke-width="0.08">Graf</text><text x="111.00" y="37.80" font-size="4.6" fill="#222" textLength="17.40" lengthAdjust="spacingAndGlyphs" stroke="#222" stroke-width="0.08">Opis lotu</text><text x="133.50" y="37.80" font-size="4.6" fill="#222" textLength="30.90" lengthAdjust="spacingAndGlyphs" stroke="#222" stroke-width="0.08">Strona startowa</text><text x="24.75" y="43.55" font-size="4.8" fill="#1a1a1a" textLength="13.25" lengthAdjust="spacingAndGlyphs" stroke="#1a1a1a" stroke-width="0.06">Lot #2</text><text x="24.75" y="50.22" font-size="4.8" fill="#1a1a1a" textLength="13.25" lengthAdjust="spacingAndGlyphs" stroke="#1a1a1a" stroke-width="0.06">Lot #5</text><text x="24.75" y="56.89" font-size="4.8" fill="#1a1a1a" textLength="13.25" lengthAdjust="spacingAndGlyphs" stroke="#1a1a1a" stroke-width="0.06">Lot #8</text><text x="24.75" y="63.56" font-size="4.8" fill="#d8ecff" textLength="16.00" lengthAdjust="spacingAndGlyphs" stroke="#d8ecff" stroke-width="0.06">Lot #10</text><text x="24.75" y="70.23" font-size="4.8" fill="#1a1a1a" textLength="16.00" lengthAdjust="spacingAndGlyphs" stroke="#1a1a1a" stroke-width="0.06">Lot #11</text><text x="24.75" y="76.90" font-size="4.8" fill="#1a1a1a" textLength="16.00" lengthAdjust="spacingAndGlyphs" stroke="#1a1a1a" stroke-width="0.06">Lot #12</text><text x="9.00" y="329.70" font-size="4.6" fill="#333" textLength="23.50" lengthAdjust="spacingAndGlyphs" stroke="#333" stroke-width="0.08">Wlasciwosci</text><text x="26.00" y="336.70" font-size="4.6" fill="#222" textLength="24.00" lengthAdjust="spacingAndGlyphs" stroke="#222" stroke-width="0.08">Czas lotu [s]</text><text x="55.60" y="336.70" font-size="4.6" fill="#222" textLength="6.50" lengthAdjust="spacingAndGlyphs" stroke="#222" stroke-width="0.08">489</text><text x="13.00" y="346.70" font-size="4.6" fill="#222" textLength="37.00" lengthAdjust="spacingAndGlyphs" stroke="#222" stroke-width="0.08">Czas probkowania</text><text x="55.60" y="346.70" font-size="4.6" fill="#222" textLength="5.50" lengthAdjust="spacingAndGlyphs" stroke="#222" stroke-width="0.08">0.1</text><text x="21.00" y="356.70" font-size="4.6" fill="#222" textLength="29.00" lengthAdjust="spacingAndGlyphs" stroke="#222" stroke-width="0.08">Max wysokosc</text><text x="55.60" y="356.70" font-size="4.6" fill="#222" textLength="11.50" lengthAdjust="spacingAndGlyphs" stroke="#222" stroke-width="0.08">157.7</text><text x="22.00" y="366.70" font-size="4.6" fill="#222" textLength="28.00" lengthAdjust="spacingAndGlyphs" stroke="#222" stroke-width="0.08">Min wysokosc</text><text x="55.60" y="366.70" font-size="4.6" fill="#222" textLength="7.50" lengthAdjust="spacingAndGlyphs" stroke="#222" stroke-width="0.08">-0.7</text><text x="30.00" y="376.70" font-size="4.6" fill="#222" textLength="20.00" lengthAdjust="spacingAndGlyphs" stroke="#222" stroke-width="0.08">Max vario</text><text x="55.60" y="376.70" font-size="4.6" fill="#222" textLength="8.50" lengthAdjust="spacingAndGlyphs" stroke="#222" stroke-width="0.08">19.4</text><text x="31.50" y="386.70" font-size="4.6" fill="#222" textLength="18.50" lengthAdjust="spacingAndGlyphs" stroke="#222" stroke-width="0.08">Min vario</text><text x="55.60" y="386.70" font-size="4.6" fill="#222" textLength="6.00" lengthAdjust="spacingAndGlyphs" stroke="#222" stroke-width="0.08">-15</text><text x="28.00" y="396.70" font-size="4.6" fill="#222" textLength="22.00" lengthAdjust="spacingAndGlyphs" stroke="#222" stroke-width="0.08">Max speed</text><line x1="55.8" y1="395.3" x2="61.5" y2="395.3" stroke="#444" stroke-width="0.5"/><text x="17.50" y="406.70" font-size="4.6" fill="#222" textLength="32.50" lengthAdjust="spacingAndGlyphs" stroke="#222" stroke-width="0.08">Aver Gnd Speed</text><line x1="55.8" y1="405.3" x2="61.5" y2="405.3" stroke="#444" stroke-width="0.5"/><text x="22.50" y="416.70" font-size="4.6" fill="#222" textLength="27.50" lengthAdjust="spacingAndGlyphs" stroke="#222" stroke-width="0.08">Wysokosc FSJ</text><text x="55.60" y="416.70" font-size="4.6" fill="#222" textLength="11.00" lengthAdjust="spacingAndGlyphs" stroke="#222" stroke-width="0.08">151.4</text><rect x="96.35" y="404.05" width="5.5" height="5.3" fill="#fff" stroke="#707070" stroke-width="0.7"/><path d="M97.4,406.59999999999997 L98.7,408.0 L100.9,404.9" fill="none" stroke="#333" stroke-width="0.65"/><text x="104.00" y="408.20" font-size="4.6" fill="#111" textLength="32.90" lengthAdjust="spacingAndGlyphs" stroke="#111" stroke-width="0.08">Pokaz wysokosc</text><rect x="146.35" y="404.05" width="5.5" height="5.3" fill="#fff" stroke="#707070" stroke-width="0.7"/><path d="M147.4,406.59999999999997 L148.7,408.0 L150.9,404.9" fill="none" stroke="#333" stroke-width="0.65"/><text x="154.00" y="408.20" font-size="4.6" fill="#111" textLength="42.50" lengthAdjust="spacingAndGlyphs" stroke="#111" stroke-width="0.08">Show filtered altitude</text><rect x="197.35" y="404.05" width="5.5" height="5.3" fill="#fff" stroke="#707070" stroke-width="0.7"/><text x="205.00" y="408.20" font-size="4.6" fill="#111" textLength="35.50" lengthAdjust="spacingAndGlyphs" stroke="#111" stroke-width="0.08">Show abs. altitude</text><rect x="247.35" y="404.05" width="5.5" height="5.3" fill="#fff" stroke="#707070" stroke-width="0.7"/><text x="255.00" y="408.20" font-size="4.6" fill="#111" textLength="22.00" lengthAdjust="spacingAndGlyphs" stroke="#111" stroke-width="0.08">Pokaz vario</text><rect x="297.35" y="404.05" width="5.5" height="5.3" fill="#fff" stroke="#707070" stroke-width="0.7"/><text x="305.00" y="408.20" font-size="4.6" fill="#111" textLength="34.50" lengthAdjust="spacingAndGlyphs" stroke="#111" stroke-width="0.08">Wyswietl napiecie</text><rect x="347.35" y="404.05" width="5.5" height="5.3" fill="#fff" stroke="#707070" stroke-width="0.7"/><path d="M348.4,406.59999999999997 L349.7,408.0 L351.9,404.9" fill="none" stroke="#333" stroke-width="0.65"/><text x="355.00" y="408.20" font-size="4.6" fill="#111" textLength="35.50" lengthAdjust="spacingAndGlyphs" stroke="#111" stroke-width="0.08">Pokaz temperature</text><rect x="397.35" y="404.05" width="5.5" height="5.3" fill="#fff" stroke="#707070" stroke-width="0.7"/><text x="405.00" y="408.20" font-size="4.6" fill="#111" textLength="32.00" lengthAdjust="spacingAndGlyphs" stroke="#111" stroke-width="0.08">Show Throttle In</text><rect x="447.35" y="404.05" width="5.5" height="5.3" fill="#fff" stroke="#707070" stroke-width="0.7"/><text x="455.00" y="408.20" font-size="4.6" fill="#111" textLength="34.50" lengthAdjust="spacingAndGlyphs" stroke="#111" stroke-width="0.08">Show Throttle Out</text><rect x="496.35" y="404.05" width="5.5" height="5.3" fill="#fff" stroke="#707070" stroke-width="0.7"/><path d="M497.4,406.59999999999997 L498.7,408.0 L500.9,404.9" fill="none" stroke="#333" stroke-width="0.65"/><text x="504.00" y="408.20" font-size="4.6" fill="#111" textLength="28.00" lengthAdjust="spacingAndGlyphs" stroke="#111" stroke-width="0.08">Pokaz markery</text><rect x="709.35" y="423.55" width="5.5" height="5.3" fill="#fff" stroke="#707070" stroke-width="0.7"/><path d="M710.4,426.09999999999997 L711.7,427.5 L713.9,424.4" fill="none" stroke="#333" stroke-width="0.65"/><text x="717.60" y="427.70" font-size="4.6" fill="#222" textLength="45.00" lengthAdjust="spacingAndGlyphs" stroke="#222" stroke-width="0.08">Time axis-only seconds</text><text x="765.00" y="411.80" font-size="6.8" fill="#b3c0dc" font-weight="bold" textLength="20.30" lengthAdjust="spacingAndGlyphs">SHARE</text><text x="755.60" y="414.90" font-size="11.5" fill="#fff" font-weight="bold">f</text><text x="737.00" y="440.10" font-size="4.6" fill="#e6ebf2" textLength="7.30" lengthAdjust="spacingAndGlyphs" stroke="#e6ebf2" stroke-width="0.08">POL</text><text x="737.00" y="446.90" font-size="4.6" fill="#e6ebf2" textLength="7.30" lengthAdjust="spacingAndGlyphs" stroke="#e6ebf2" stroke-width="0.08">PLP</text><text x="758.00" y="440.10" font-size="4.6" fill="#e6ebf2" textLength="10.00" lengthAdjust="spacingAndGlyphs" stroke="#e6ebf2" stroke-width="0.08">16:11</text><text x="751.00" y="446.90" font-size="4.6" fill="#e6ebf2" textLength="25.00" lengthAdjust="spacingAndGlyphs" stroke="#e6ebf2" stroke-width="0.08">2018-08-16</text></svg>
</body></html>
